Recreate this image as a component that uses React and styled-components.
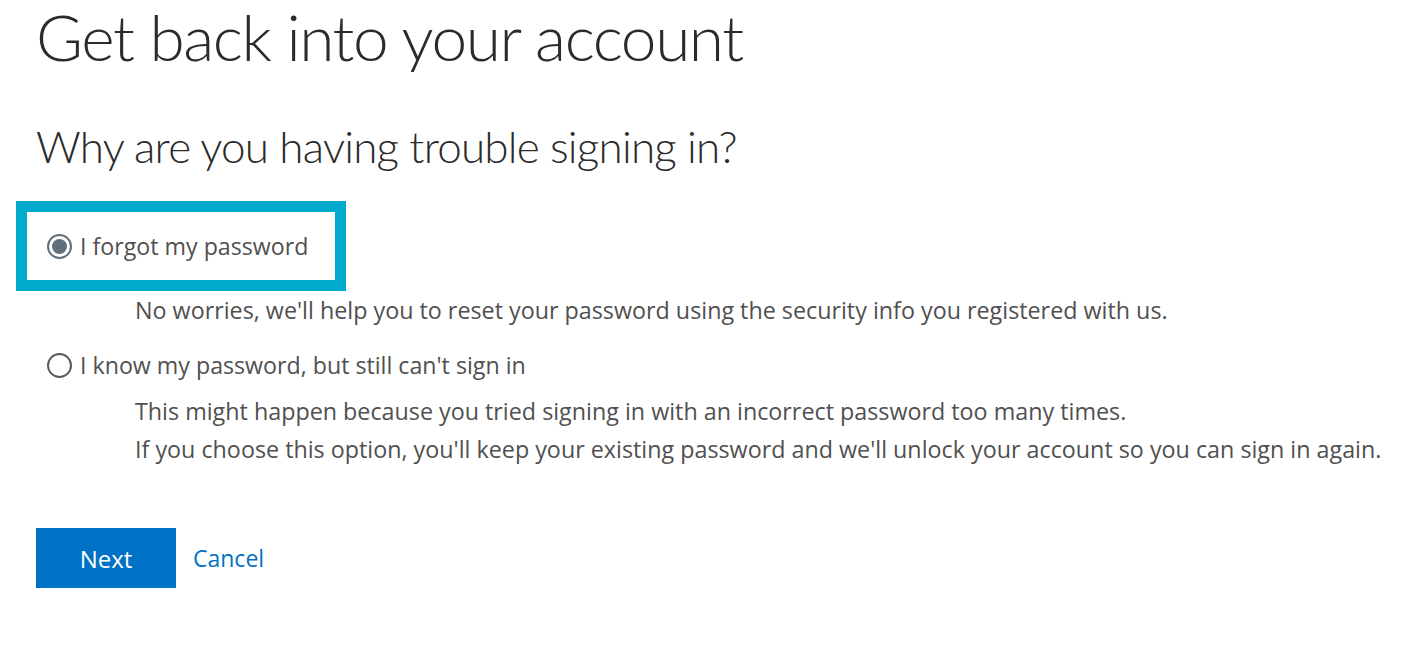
import React, { useState } from "react";
import styled, { createGlobalStyle } from "styled-components";

const GlobalStyle = createGlobalStyle`
  html, body {
    margin: 0;
    padding: 0;
    background: #fff;
  }
  body {
    font-family: "Open Sans", "Noto Sans", sans-serif;
    color: #505050;
  }
`;

const Page = styled.div`
  padding: 0 0 0 36px;
`;

const Title = styled.h1`
  margin: 0;
  font-family: Lato, "Open Sans", sans-serif;
  font-size: 64px;
  font-weight: 300;
  line-height: 74px;
  letter-spacing: -1.45px;
  color: #2b2b2b;
`;

const SubTitle = styled.h2`
  margin: 42px 0 0;
  font-family: Lato, "Open Sans", sans-serif;
  font-size: 44px;
  font-weight: 300;
  line-height: 60px;
  letter-spacing: -0.8px;
  color: #2b2b2b;
`;

const Options = styled.div`
  display: flex;
  flex-direction: column;
  align-items: flex-start;
  margin: 25px 0 0 -20px;
`;

const OptionRow = styled.label`
  display: flex;
  align-items: center;
  gap: 8px;
  font-size: 23.2px;
  line-height: 32px;
  color: #505050;
  cursor: pointer;
  border: ${(p) => (p.$focused ? "11px solid #00aacc" : "none")};
  padding: ${(p) => (p.$focused ? "18px 27px 18px 20px" : "0 0 0 31px")};
  margin-top: ${(p) => p.$gap || "0"};
`;

const Radio = styled.span`
  flex: none;
  width: 25px;
  height: 25px;
  box-sizing: border-box;
  border-radius: 50%;
  border: 2px solid ${(p) => (p.$checked ? "#5e6e7b" : "#5a5a5a")};
  display: flex;
  align-items: center;
  justify-content: center;
  &::after {
    content: "";
    width: 15px;
    height: 15px;
    border-radius: 50%;
    background: #5f6f7e;
    display: ${(p) => (p.$checked ? "block" : "none")};
  }
`;

const Description = styled.div`
  padding-left: 119px;
  font-size: 23.3px;
  line-height: 38px;
  color: #505050;
  margin-top: ${(p) => p.$gap || "0"};
`;

const Actions = styled.div`
  display: flex;
  align-items: center;
  gap: 17px;
  margin-top: 60px;
`;

const NextButton = styled.button`
  width: 140px;
  height: 60px;
  border: none;
  padding: 0;
  background: #0072c6;
  color: #fff;
  font-family: inherit;
  font-size: 24px;
  cursor: pointer;
`;

const CancelLink = styled.a`
  color: #0072c6;
  font-size: 23px;
  text-decoration: none;
  cursor: pointer;
`;

export default function App() {
  const [choice, setChoice] = useState("forgot");
  return (
    <>
      <GlobalStyle />
      <Page>
        <Title>Get back into your account</Title>
        <SubTitle>Why are you having trouble signing in?</SubTitle>
        <Options>
          <OptionRow $focused onClick={() => setChoice("forgot")}>
            <Radio $checked={choice === "forgot"} />
            I forgot my password
          </OptionRow>
          <Description>
            No worries, we'll help you to reset your password using the security info you registered with us.
          </Description>
          <OptionRow $gap="20px" onClick={() => setChoice("unlock")}>
            <Radio $checked={choice === "unlock"} />
            I know my password, but still can't sign in
          </OptionRow>
          <Description $gap="11px">
            This might happen because you tried signing in with an incorrect password too many times.
            <br />
            If you choose this option, you'll keep your existing password and we'll unlock your account so you can sign in again.
          </Description>
        </Options>
        <Actions>
          <NextButton>Next</NextButton>
          <CancelLink>Cancel</CancelLink>
        </Actions>
      </Page>
    </>
  );
}
